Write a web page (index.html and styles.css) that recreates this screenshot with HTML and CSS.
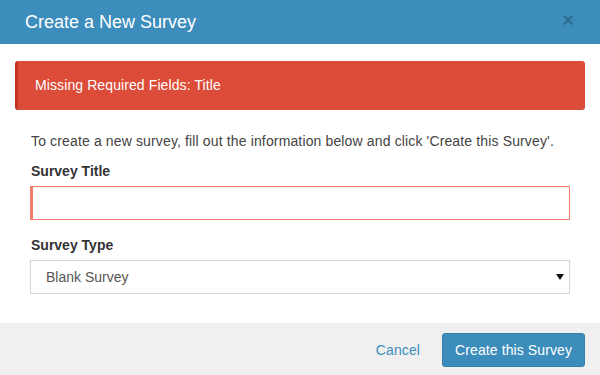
FILE: index.html
```html
<!DOCTYPE html>
<html>
  <head>
    <meta charset="UTF-8">
    <title>Create a New Survey</title>
    <link rel="stylesheet" href="styles.css">
  </head>
  <body>
    <div class="modal">
      <!-- header bar with title and close button -->
      <div class="modal-header">
        <h4 class="modal-title">Create a New Survey</h4>
        <span class="close">&times;</span>
      </div>

      <div class="modal-body">
        <div class="alert">Missing Required Fields: Title</div>

        <div class="form">
          <p class="intro">To create a new survey, fill out the information below and click 'Create this Survey'.</p>

          <label class="field-label" for="title">Survey Title</label>
          <input type="text" id="title" class="form-control has-error">

          <label class="field-label type-label" for="type">Survey Type</label>
          <div class="select-wrap">
            <select id="type" class="form-control select">
              <option>Blank Survey</option>
            </select>
            <span class="arrow"></span>
          </div>
        </div>
      </div>

      <div class="modal-footer">
        <a href="#" class="btn-link">Cancel</a>
        <button type="button" class="btn-primary">Create this Survey</button>
      </div>
    </div>
  </body>
</html>
```

FILE: styles.css
```css
body {
  margin: 0;
  font-family: "Liberation Sans", Arial, sans-serif;
  font-size: 14px;
  color: #333;
  background-color: #fff;
}

.modal {
  width: 600px;
  height: 375px;
  display: flex;
  flex-direction: column;
}

.modal-header {
  height: 44px;
  background-color: #3c8dbc;
  display: flex;
  align-items: center;
  justify-content: space-between;
  padding: 0 25px;
  color: #fff;
}

.modal-title {
  margin: 0;
  font-size: 18px;
  font-weight: normal;
  line-height: 20px;
}

.close {
  font-size: 20px;
  font-weight: bold;
  line-height: 20px;
  color: #000;
  opacity: .22;
  margin-right: 1px;
  margin-top: -4px;
}

.modal-body {
  flex: 1;
  padding: 17px 15px 0;
}

.alert {
  background-color: #dd4b39;
  border-left: 3px solid #c23321;
  border-radius: 3px;
  color: #fff;
  padding: 15px 17px;
  line-height: 19px;
  letter-spacing: .1px;
}

.form {
  padding: 0 15px;
}

.intro {
  margin: 21px 0 10px 1px;
  line-height: 20px;
  color: #444;
  letter-spacing: .14px;
}

.field-label {
  display: block;
  font-weight: bold;
  line-height: 20px;
  margin: 0 0 5px 1px;
}

.type-label {
  margin-top: 15px;
}

.form-control {
  display: block;
  box-sizing: border-box;
  width: 100%;
  height: 34px;
  margin: 0;
  padding: 6px 15px;
  font-family: inherit;
  font-size: 14px;
  color: #555;
  background-color: #fff;
  border: 1px solid #d2d6de;
  border-radius: 0;
  outline: none;
}

.has-error {
  border-color: #f47c6c;
  border-left-width: 3px;
}

.select-wrap {
  position: relative;
}

.select {
  -webkit-appearance: none;
  appearance: none;
}

.arrow {
  position: absolute;
  right: 6px;
  top: 14px;
  width: 0;
  height: 0;
  border-left: 4px solid transparent;
  border-right: 4px solid transparent;
  border-top: 6px solid #111;
}

.modal-footer {
  height: 52px;
  box-sizing: border-box;
  background-color: #f0f0f0;
  padding: 10px 15px 0;
  display: flex;
  justify-content: flex-end;
  align-items: flex-start;
  gap: 10px;
}

.btn-link {
  color: #3c8dbc;
  text-decoration: none;
  padding: 7px 12px;
  line-height: 20px;
  letter-spacing: .1px;
}

.btn-primary {
  font-family: inherit;
  font-size: 14px;
  line-height: 20px;
  letter-spacing: .1px;
  color: #fff;
  background-color: #3c8dbc;
  border: 1px solid #367fa9;
  border-radius: 3px;
  padding: 6px 12px;
}
```
